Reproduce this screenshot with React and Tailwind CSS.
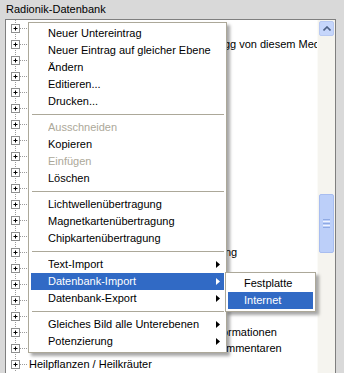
const rows = [
  { text: "Allgemeines" },
  { pre: "Anwendung", post: "g von diesem Medikament" },
  { text: "Chakren" },
  { text: "Edelsteine" },
  { text: "Farben" },
  { text: "Homöopathie" },
  { text: "Meridiane" },
  { text: "Organe" },
  { text: "Bachblüten" },
  { text: "Vitamine" },
  { text: "Mineralien" },
  { text: "Aromen" },
  { text: "Schüssler-Salze" },
  { text: "Spurenelemente" },
  { pre: "Frequenzbehandlun", post: "g" },
  { text: "Akupunktur" },
  { text: "Hormone" },
  { text: "Emotionen" },
  { text: "Allergene" },
  { pre: "Weitere Info", post: "rmationen" },
  { pre: "Liste mit Ko", post: "mmentaren" },
  { text: "Heilpflanzen / Heilkräuter" },
];

const suffixStart = { 1: 202, 14: 203, 19: 200, 20: 198 };

function TreeNode() {
  return (
    <svg width="22" height="16" className="shrink-0">
      <line x1="9.5" y1="0" x2="9.5" y2="16" stroke="#9a9a9a" strokeDasharray="1 1" />
      <line x1="14" y1="8.5" x2="21" y2="8.5" stroke="#9a9a9a" strokeDasharray="1 1" />
      <rect x="5.5" y="4.5" width="8" height="8" fill="#fff" stroke="#8e8f8f" />
      <path d="M7.5 8.5h4M9.5 6.5v4" stroke="#000" />
    </svg>
  );
}

function Arrow({ white }) {
  return (
    <svg width="4" height="7" className="shrink-0">
      <polygon points="0,0 4,3.5 0,7" fill={white ? "#fff" : "#000"} />
    </svg>
  );
}

function Item({ label, disabled, sub, active }) {
  return (
    <div
      className={`h-[17px] flex items-center pl-[17px] pr-[4px] ${
        active ? "bg-[#316ac5] text-white" : disabled ? "text-[#aca899]" : "text-black"
      }`}
    >
      <span className="flex-1 whitespace-nowrap overflow-hidden">{label}</span>
      {sub && <Arrow white={active} />}
    </div>
  );
}

function Sep() {
  return (
    <div className="h-[9px] flex items-center pl-[1px]">
      <div className="w-full h-px bg-[#aca899]" />
    </div>
  );
}

export default function App() {
  return (
    <div className="w-[344px] h-[373px] bg-[#d9d9d9] relative overflow-hidden font-['Liberation_Sans',sans-serif] text-[11px] leading-[13px] text-black">
      <div className="h-[19px] pl-[6px] pt-[3px]">Radionik-Datenbank</div>

      <div className="ml-[5px] w-[331px] h-[360px] border border-[#7f7f7f] bg-white flex">
        <div className="w-[311px] overflow-hidden">
          {rows.map((r, i) => (
            <div key={i} className="h-[16px] flex items-center whitespace-nowrap">
              <TreeNode />
              {r.text ? (
                <span className="pl-[1px]">{r.text}</span>
              ) : (
                <>
                  <span
                    className="pl-[1px] overflow-hidden text-right shrink-0"
                    style={{ width: suffixStart[i] }}
                  >
                    {r.pre}
                  </span>
                  <span>{r.post}</span>
                </>
              )}
            </div>
          ))}
        </div>

        {/* scrollbar */}
        <div className="w-[18px] bg-[#f5f4ef] border-l border-[#fbfbf8] flex flex-col items-center">
          <div className="mt-[1px] w-[15px] h-[15px] rounded-[2px] border border-[#b8c9f2] bg-[#c6d6fb] flex items-center justify-center">
            <svg width="8" height="5">
              <path d="M0.5 4.5L4 1L7.5 4.5" fill="none" stroke="#4d6185" strokeWidth="1.6" />
            </svg>
          </div>
          <div className="mt-[158px] w-[15px] h-[59px] rounded-[2px] border border-[#a8bdf0] bg-[#bccff9] flex flex-col items-center justify-center gap-[1px]">
            <div className="w-[7px] h-px bg-[#8faae4]" />
            <div className="w-[7px] h-px bg-[#eef3fe]" />
            <div className="w-[7px] h-px bg-[#8faae4]" />
            <div className="w-[7px] h-px bg-[#eef3fe]" />
            <div className="w-[7px] h-px bg-[#8faae4]" />
          </div>
        </div>
      </div>

      {/* context menu */}
      <div className="absolute left-[28px] top-[22px] w-[199px] border border-[#aca899] bg-white p-[2px] shadow-[3px_3px_3px_rgba(0,0,0,0.35)]">
        <Item label="Neuer Untereintrag" />
        <Item label="Neuer Eintrag auf gleicher Ebene" />
        <Item label="Ändern" />
        <Item label="Editieren..." />
        <Item label="Drucken..." />
        <Sep />
        <Item label="Ausschneiden" disabled />
        <Item label="Kopieren" />
        <Item label="Einfügen" disabled />
        <Item label="Löschen" />
        <Sep />
        <Item label="Lichtwellenübertragung" />
        <Item label="Magnetkartenübertragung" />
        <Item label="Chipkartenübertragung" />
        <Sep />
        <Item label="Text-Import" sub />
        <Item label="Datenbank-Import" sub active />
        <Item label="Datenbank-Export" sub />
        <Sep />
        <Item label="Gleiches Bild alle Unterebenen" sub />
        <Item label="Potenzierung" sub />
      </div>

      {/* submenu */}
      <div className="absolute left-[225px] top-[272px] w-[91px] border border-[#aca899] bg-white p-[2px] shadow-[3px_3px_3px_rgba(0,0,0,0.35)]">
        <div className="h-[17px] flex items-center pl-[16px]">Festplatte</div>
        <div className="h-[17px] flex items-center pl-[16px] bg-[#316ac5] text-white">Internet</div>
      </div>
    </div>
  );
}
